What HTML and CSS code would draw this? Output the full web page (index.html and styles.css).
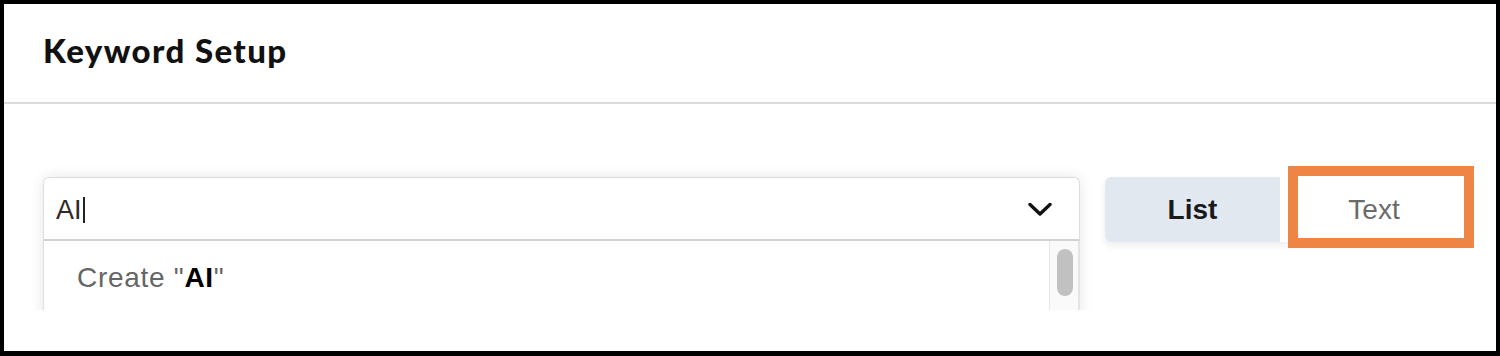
FILE: index.html
```html
<!DOCTYPE html>
<html lang="en">
<head>
<meta charset="utf-8">
<title>Keyword Setup</title>
<link rel="stylesheet" href="styles.css">
</head>
<body>
<div class="frame">
  <header class="header">
    <h1 class="title">Keyword Setup</h1>
  </header>
  <section class="body">
    <div class="row">
      <div class="combo">
        <div class="input">
          <span class="value">AI</span><span class="caret"></span>
          <svg class="chevron" width="24" height="15" viewBox="0 0 24 15" aria-hidden="true">
            <path d="M2 2.5 L12 12 L22 2.5" fill="none" stroke="#111" stroke-width="3.4" stroke-linecap="round" stroke-linejoin="round"/>
          </svg>
        </div>
        <div class="dropdown">
          <div class="option">Create "<b>AI</b>"</div>
          <div class="scrolltrack"><div class="thumb"></div></div>
        </div>
      </div>
      <div class="toggle">
        <button class="seg seg-active">List</button>
        <button class="seg">Text</button>
        <div class="highlight"></div>
      </div>
    </div>
  </section>
</div>
</body>
</html>
```
FILE: styles.css
```css
html, body {
  margin: 0;
  padding: 0;
  background: #fff;
}
.frame {
  width: 1500px;
  height: 356px;
  box-sizing: border-box;
  border: 4px solid #000;
  border-bottom-width: 5px;
  background: #fff;
  font-family: "Liberation Sans", Arial, sans-serif;
}
.header {
  height: 100px;
  box-sizing: border-box;
  padding: 27px 0 0 39px;
  border-bottom: 2px solid #dcdcdc;
}
.title {
  margin: 0;
  font-family: Lato, "Liberation Sans", sans-serif;
  font-weight: 900;
  font-size: 33px;
  line-height: 38px;
  color: #111;
  letter-spacing: 1.4px;
}
.body {
  height: 206px;
  box-sizing: border-box;
  overflow: hidden;
  padding: 73px 0 0 39px;
}
.row {
  display: flex;
  align-items: flex-start;
  gap: 25px;
}
.combo {
  width: 1037px;
  box-shadow: 0 0 14px rgba(0, 0, 0, 0.10);
  border-radius: 6px 6px 0 0;
}
.input {
  height: 64px;
  box-sizing: border-box;
  display: flex;
  align-items: center;
  padding: 0 27px 0 12px;
  border: 1px solid #dedede;
  border-bottom: 2px solid #d2d2d2;
  border-radius: 6px 6px 0 0;
  background: #fff;
}
.value {
  font-size: 27px;
  color: #2b2b2b;
  line-height: 32px;
  margin-top: 2px;
}
.caret {
  width: 2px;
  height: 26px;
  background: #222;
  margin-left: 1px;
  margin-top: 2px;
}
.chevron {
  margin-left: auto;
  margin-top: 2px;
}
.dropdown {
  position: relative;
  height: 120px;
  box-sizing: border-box;
  border-left: 1px solid #dedede;
  border-right: 2px solid #e4e4e4;
  background: #fff;
}
.option {
  padding: 17px 0 0 33px;
  font-size: 28px;
  line-height: 40px;
  color: #666;
  letter-spacing: 0.7px;
}
.option b {
  color: #000;
  font-weight: 700;
}
.scrolltrack {
  position: absolute;
  top: 0;
  right: 0;
  width: 29px;
  height: 100%;
  box-sizing: border-box;
  border-left: 1px solid #e6e6e6;
  background: #fafafa;
  padding: 8px 0 0 7px;
}
.thumb {
  width: 16px;
  height: 47px;
  border-radius: 8px;
  background: #c1c1c1;
}
.toggle {
  position: relative;
  display: flex;
  border-radius: 6px;
  box-shadow: 0 4px 8px rgba(0, 0, 0, 0.07);
}
.seg {
  height: 65px;
  border: 0;
  margin: 0;
  padding: 0;
  font-family: "Liberation Sans", Arial, sans-serif;
  font-size: 28px;
  background: #fff;
  color: #6b6b6b;
  width: 188px;
}
.seg-active {
  width: 175px;
  background: #e2e8f0;
  color: #1a1a1a;
  font-weight: 700;
  border-radius: 6px 0 0 6px;
}
.highlight {
  position: absolute;
  left: 183px;
  top: -11px;
  width: 186px;
  height: 82px;
  box-sizing: border-box;
  border: 10px solid #ef8544;
}
```
